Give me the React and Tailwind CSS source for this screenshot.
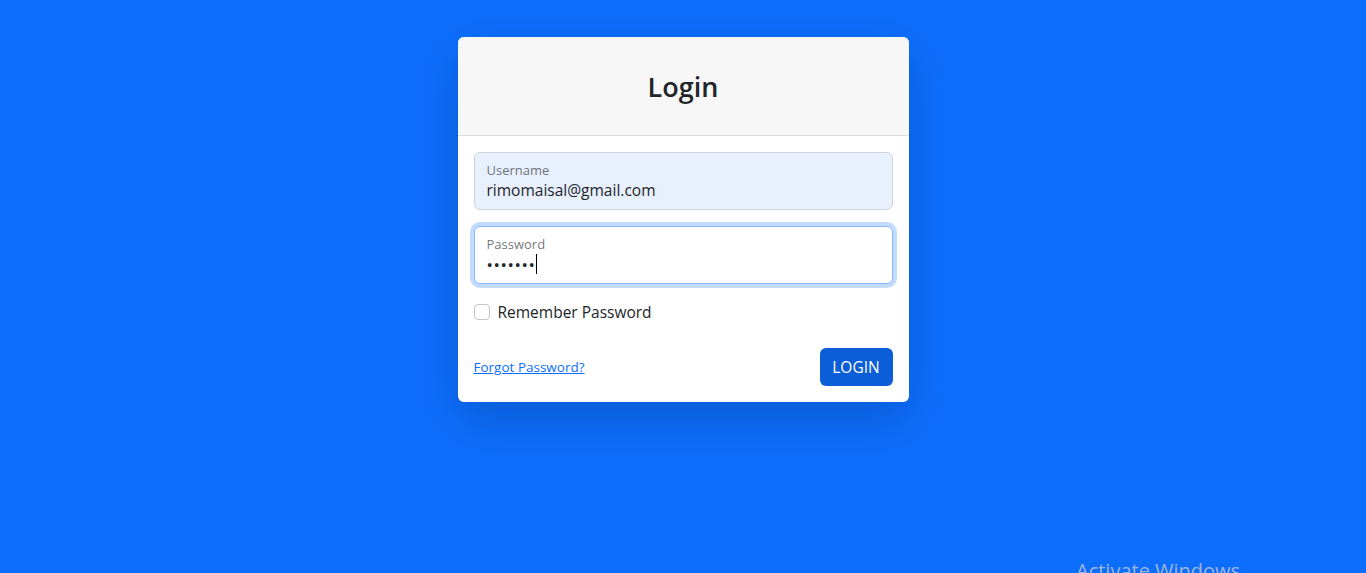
import React from 'react';

export default function App() {
  return (
    <div
      className="relative min-h-screen h-[573px] overflow-hidden bg-[#0d6efd] text-[#212529]"
      style={{ fontFamily: '"Segoe UI", "Open Sans", "Noto Sans", sans-serif' }}
    >
      <div className="pt-[37px]">
        <div className="mx-auto w-[451px] rounded-[6px] bg-white shadow-[0_1rem_3rem_rgba(0,0,0,0.175)] overflow-hidden">
          {/* header */}
          <div className="bg-[#f7f7f7] border-b border-[#dcdcdc] pt-[34px] pb-[32px] text-center">
            <h3 className="text-[27px] font-semibold leading-[1.2] text-[#212529]">Login</h3>
          </div>

          {/* body */}
          <div className="p-4">
            <div className="h-[58px] rounded-[6px] border border-[#ced4da] bg-[#e8f0fe] px-3 pt-[7px]">
              <div className="text-[13px] leading-[20px] text-[#212529]/65">Username</div>
              <div className="text-[15.5px] leading-[20px]">rimomaisal@gmail.com</div>
            </div>

            <div className="mt-4 h-[58px] rounded-[6px] border border-[#86b7fe] bg-white px-3 pt-[7px] shadow-[0_0_0_4px_rgba(13,110,253,0.25)]">
              <div className="text-[13px] leading-[20px] text-[#212529]/65">Password</div>
              <div className="flex items-center h-[20px]">
                <span className="text-[17px] tracking-[0.6px] leading-none">•••••••</span>
                <span className="ml-[1px] inline-block h-[20px] w-px bg-black" />
              </div>
            </div>

            <label className="mt-4 flex items-center gap-2">
              <span className="inline-block h-4 w-4 rounded-[4px] border border-[#bfc4c9] bg-white" />
              <span className="text-[15.5px] leading-6">Remember Password</span>
            </label>

            <div className="mt-6 flex items-center justify-between">
              <a href="#" className="text-[13.5px] text-[#0d6efd] underline">Forgot Password?</a>
              <button className="h-[38px] w-[73px] rounded-[6px] bg-[#0b5ed7] text-[15.5px] text-white">LOGIN</button>
            </div>
          </div>
        </div>
      </div>

      <div className="absolute left-[1076px] top-[561px] text-[20px] leading-none text-[#c2c8d2]/80">
        Activate Windows
      </div>
    </div>
  );
}
